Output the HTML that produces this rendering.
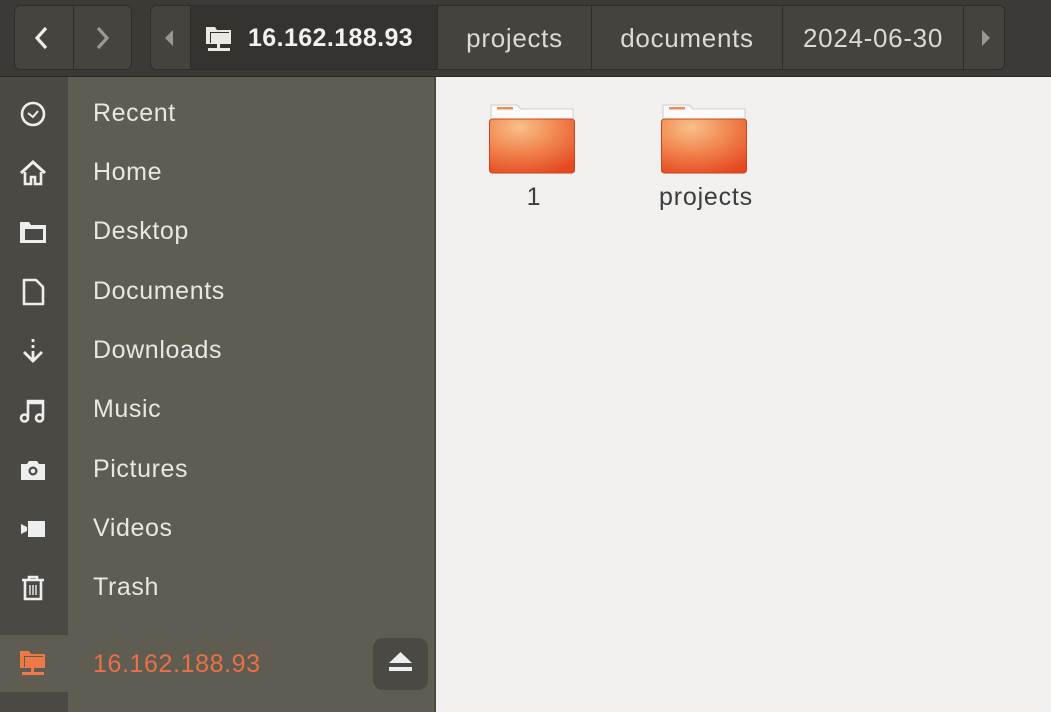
<!DOCTYPE html>
<html><head><meta charset="utf-8"><style>
*{margin:0;padding:0;box-sizing:border-box}
body{width:1051px;height:712px;overflow:hidden;background:#f1f0ef;font-family:"Liberation Sans",sans-serif;position:relative}
.hdr{position:absolute;left:0;top:0;width:1051px;height:77px;background:#3b3a36;border-bottom:1px solid #2a2926}
.btn{position:absolute;top:5px;height:65px;background:#45443f;border:1px solid #2e2d2a}
.seg{position:absolute;top:5px;height:65px;background:#44433e;border:1px solid #2e2d2a;color:#dcdad5;font-size:26px;letter-spacing:0.7px;line-height:65px;text-align:center}
.side{position:absolute;left:0;top:77px;width:436px;height:635px;background:#5f5d52;border-right:2px solid #4a4944}
.icol{position:absolute;left:0;top:77px;width:68px;height:558px;background:#4a4944}
.icol2{position:absolute;left:0;top:692px;width:68px;height:20px;background:#4a4944}
.row{position:absolute;left:0;width:436px;height:59px}
.row span{position:absolute;left:93px;top:1px;line-height:59px;font-size:25px;letter-spacing:0.6px;color:#e9e7e2}
.row svg{position:absolute;left:18px;top:16px}
.lbl{position:absolute;font-size:25px;letter-spacing:0.8px;color:#3c3c3c;text-align:center}
</style></head><body>
<div class="hdr"></div>
<div class="btn" style="left:14px;width:60px;border-radius:6px 0 0 6px"></div>
<div class="btn" style="left:73px;width:59px;border-radius:0 6px 6px 0"></div>
<svg style="position:absolute;left:32px;top:25px" width="22" height="26"><path d="M14 3 L5 13 L14 23" stroke="#eee" stroke-width="3.2" fill="none"/></svg>
<svg style="position:absolute;left:92px;top:25px" width="22" height="26"><path d="M6 3 L15 13 L6 23" stroke="#9a9891" stroke-width="3.2" fill="none"/></svg>
<div class="seg" style="left:150px;width:41px;border-radius:6px 0 0 6px"></div>
<svg style="position:absolute;left:162px;top:29px" width="14" height="18"><path d="M11 1 L3 9 L11 17Z" fill="#999790"/></svg>
<div class="seg" style="left:190px;width:248px;background:#34332f;color:#f2f1ee;font-weight:bold;text-align:left;padding-left:57px;font-size:25px;letter-spacing:0.4px">16.162.188.93</div>
<svg style="position:absolute;left:204px;top:24px" width="30" height="30" viewBox="0 0 30 30"><path d="M2 3h9l2 3h14v14H2Z" fill="#ece9e2"/><path d="M6 8h19v11H6Z" fill="#34332f"/><path d="M7 9h19v11H7Z" fill="#ece9e2"/><rect x="13" y="20" width="3" height="5" fill="#ece9e2"/><rect x="4" y="24" width="22" height="3" fill="#ece9e2"/></svg>
<div class="seg" style="left:437px;width:155px">projects</div>
<div class="seg" style="left:591px;width:192px">documents</div>
<div class="seg" style="left:782px;width:182px">2024-06-30</div>
<div class="seg" style="left:963px;width:42px;border-radius:0 6px 6px 0"></div>
<svg style="position:absolute;left:979px;top:29px" width="14" height="18"><path d="M3 1 L11 9 L3 17Z" fill="#999790"/></svg>

<div class="side"></div>
<div class="icol"></div>
<div class="icol2"></div>

<div class="row" style="top:83px"><svg width="30" height="30" viewBox="0 0 30 30"><circle cx="15" cy="15" r="11" stroke="#eee" stroke-width="2.6" fill="none"/><path d="M10 14l5 4 5-6" stroke="#eee" stroke-width="2" fill="none"/></svg><span>Recent</span></div>
<div class="row" style="top:142px"><svg width="30" height="30" viewBox="0 0 30 30"><path d="M3 15L15 4 27 15" stroke="#eee" stroke-width="3" fill="none"/><path d="M7 14v12h6v-7h4v7h6V14" stroke="#eee" stroke-width="2.6" fill="none"/></svg><span>Home</span></div>
<div class="row" style="top:201px"><svg width="30" height="30" viewBox="0 0 30 30"><path d="M2 5h9l2 3h15v18H2Z" fill="#eee"/><path d="M7 12h18v11H7Z" fill="#4a4944"/></svg><span>Desktop</span></div>
<div class="row" style="top:261px"><svg width="30" height="30" viewBox="0 0 30 30"><path d="M6 3h12l7 7v17H6Z" stroke="#eee" stroke-width="2.6" fill="none" stroke-linejoin="round"/></svg><span>Documents</span></div>
<div class="row" style="top:320px"><svg width="30" height="30" viewBox="0 0 30 30"><path d="M15 3v3M15 9v3M15 15v8M6 16l9 9 9-9" stroke="#eee" stroke-width="2.8" fill="none"/></svg><span>Downloads</span></div>
<div class="row" style="top:379px"><svg width="30" height="30" viewBox="0 0 30 30"><path d="M10 22V6h15v16M10 8h15" stroke="#eee" stroke-width="2.6" fill="none"/><circle cx="6.5" cy="23" r="3.5" stroke="#eee" stroke-width="2.6" fill="none"/><circle cx="21.5" cy="23" r="3.5" stroke="#eee" stroke-width="2.6" fill="none"/></svg><span>Music</span></div>
<div class="row" style="top:439px"><svg width="30" height="30" viewBox="0 0 30 30"><path d="M3 9h6l2-3h8l2 3h6v16H3Z" fill="#eee"/><circle cx="15" cy="16" r="4.5" fill="#4a4944"/><circle cx="15" cy="16" r="2.3" fill="#eee"/></svg><span>Pictures</span></div>
<div class="row" style="top:498px"><svg width="30" height="30" viewBox="0 0 30 30"><rect x="10" y="7" width="17" height="16" fill="#eee"/><path d="M3 10l6 3v4l-6 3Z" fill="#eee"/></svg><span>Videos</span></div>
<div class="row" style="top:557px"><svg width="30" height="30" viewBox="0 0 30 30"><path d="M4 7h22M11 7V4h8v3" stroke="#eee" stroke-width="2.6" fill="none"/><path d="M7 8v18h16V8" stroke="#eee" stroke-width="2.6" fill="none"/><path d="M12 12v10M15 12v10M18 12v10" stroke="#eee" stroke-width="1.4"/></svg><span>Trash</span></div>
<div class="row" style="top:634px;height:58px"><svg width="30" height="30" viewBox="0 0 30 30" style="top:14px"><path d="M2 3h9l2 3h14v14H2Z" fill="#f07746"/><path d="M6 8h19v11H6Z" fill="#5f5d52"/><path d="M7 9h19v11H7Z" fill="#f07746"/><rect x="13" y="20" width="3" height="5" fill="#f07746"/><rect x="4" y="24" width="22" height="3" fill="#f07746"/></svg><span style="color:#ec6f45;line-height:58px">16.162.188.93</span></div>
<div style="position:absolute;left:373px;top:638px;width:55px;height:52px;background:#4a4944;border-radius:10px"></div>
<svg style="position:absolute;left:387px;top:651px" width="27" height="24"><path d="M13.5 1 L25 12 H2Z" fill="#eee"/><rect x="2" y="16" width="23" height="4" fill="#eee"/></svg>

<svg style="position:absolute;left:489px;top:103px" width="86" height="72" viewBox="0 0 86 72"><defs><radialGradient id="g" cx="0.35" cy="0.15" r="0.95"><stop offset="0" stop-color="#f8c08a"/><stop offset="0.45" stop-color="#f18a52"/><stop offset="1" stop-color="#e5471f"/></radialGradient></defs><path d="M2 2h26l4 4h52v18H2Z" fill="#fafafa" stroke="#cfcdc8"/><rect x="8" y="4" width="16" height="2.5" fill="#ec8a60"/><rect x="0.5" y="16" width="85" height="54" rx="3" fill="url(#g)" stroke="#c9441f"/></svg>
<svg style="position:absolute;left:661px;top:103px" width="86" height="72" viewBox="0 0 86 72"><path d="M2 2h26l4 4h52v18H2Z" fill="#fafafa" stroke="#cfcdc8"/><rect x="8" y="4" width="16" height="2.5" fill="#ec8a60"/><rect x="0.5" y="16" width="85" height="54" rx="3" fill="url(#g)" stroke="#c9441f"/></svg>
<div class="lbl" style="left:484px;top:183px;width:100px">1</div>
<div class="lbl" style="left:636px;top:183px;width:140px">projects</div>
</body></html>
